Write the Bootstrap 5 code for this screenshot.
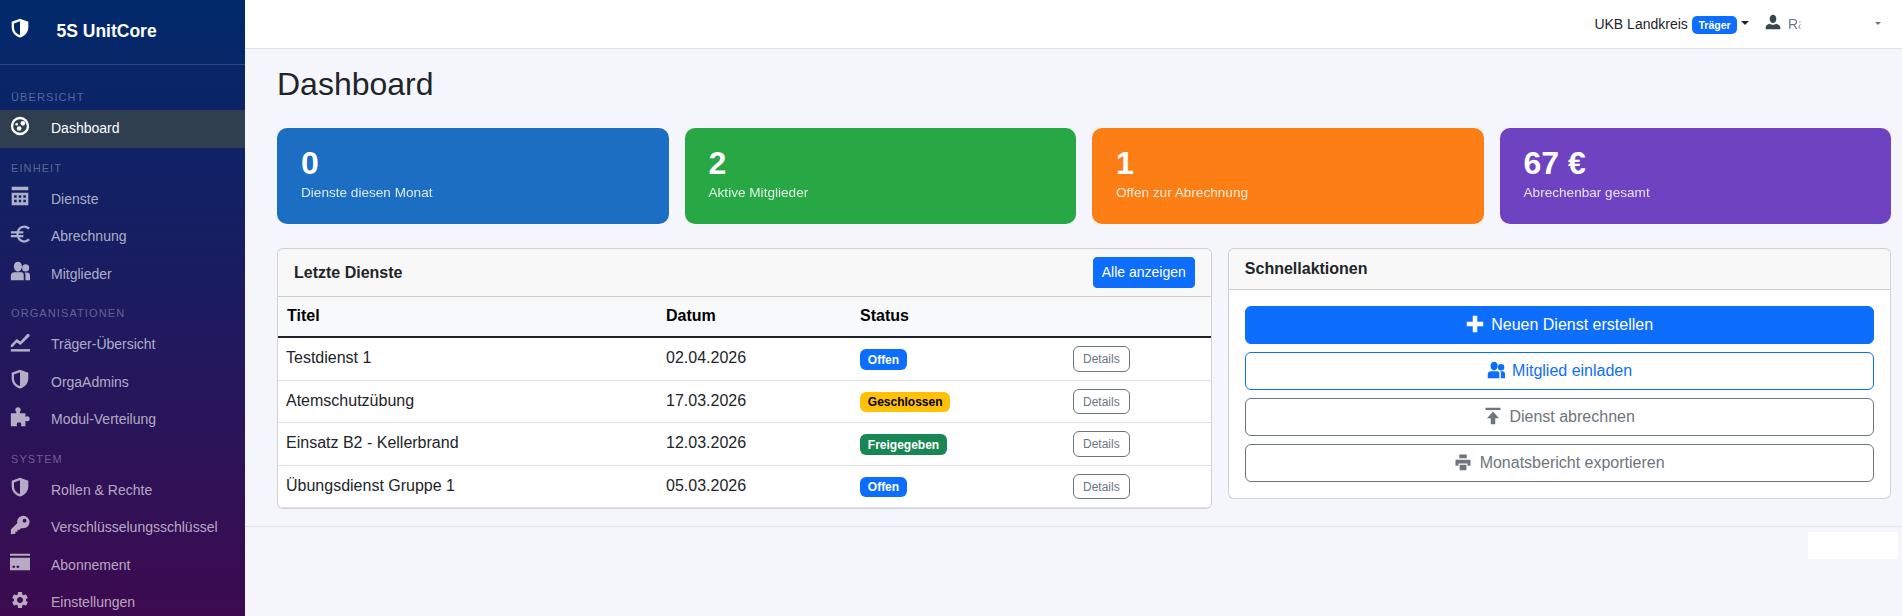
<!DOCTYPE html>
<html lang="de">
<head>
<meta charset="utf-8">
<title>Dashboard</title>
<link href="https://cdn.jsdelivr.net/npm/bootstrap@5.3.0/dist/css/bootstrap.min.css" rel="stylesheet">
<style>
html,body{height:100%;overflow:hidden}
body{font-family:"Liberation Sans",Arial,sans-serif;background:#f4f6fb;color:#212529}
.ico{display:inline-block;fill:currentColor;flex:none}
.app-shell{height:616px}
.side-rail{width:245px;flex:none;height:616px;overflow:hidden;background:linear-gradient(180deg,#012a6b 0%,#1c1b60 48%,#3d0a50 100%)}
.side-rail>*{flex:none}
.side-brand{height:65px;border-bottom:1px solid rgba(255,255,255,.16);padding:0 10px;color:#fff}
.side-brand .ico{width:20px;height:20px;margin-top:-8px}
.side-brand b{font-size:17.5px;margin-left:26.5px;margin-top:-2px}
.rail-label{font-size:11px;line-height:16px;letter-spacing:1.1px;text-transform:uppercase;color:rgba(255,255,255,.33);padding:12.2px 11px 4.5px}
.rail-label.first{padding-top:24px;padding-bottom:5px}
.rail-link{height:37.6px;padding:0 10px;font-size:14px;color:rgba(255,255,255,.65);text-decoration:none}
.rail-link:hover{color:#fff}
.rail-link.on{background:#2f3f4f;color:#fff}
.rail-link .ico{width:20px;height:20px;margin-right:21px;margin-top:-6px}
.top-strip{height:49px;background:#fff;border-bottom:1px solid #dee2e6;padding-right:21px;font-size:14px}
.top-strip a{text-decoration:none;color:#212529}
.top-strip .badge{font-size:10.5px;--bs-badge-border-radius:5px}
.user-menu{margin-left:16px}
.top-strip a.user-menu{color:#6c757d}
.user-menu .ico{width:16px;height:16px;color:#37474f;margin-right:7px;margin-top:-5px;vertical-align:middle}
.user-menu::after{border-top-width:.22em;border-left-width:.22em;border-right-width:.22em;margin-left:3px}
.name-box{display:inline-block;width:84px;background:linear-gradient(90deg,#6c757d 0,#6c757d 10px,transparent 14px);-webkit-background-clip:text;background-clip:text;color:transparent}
.page-body{padding:16px 11px 0 32px}
.page-title{font-size:32px;font-weight:400;line-height:1.2;margin:0 0 25px}
.stat-tile{height:96px;border-radius:10px;padding:16px 24px;color:#fff}
.stat-num{font-size:32px;font-weight:700;line-height:1.2}
.stat-cap{font-size:13.6px;line-height:19.5px;opacity:.85}
.tile-blue{background:#1c6ec2}
.tile-green{background:#28a745}
.tile-orange{background:#fd7e14}
.tile-purple{background:#6f42c1}
.panel-title{font-size:16px}
.card-header{font-weight:700}
.run-table{table-layout:fixed}
.run-table th{color:#000;padding-top:7px;padding-bottom:8px}
.run-table .c1{width:380px;padding-left:9px}
.run-table .c2{width:194px}
.run-table .c3{width:213px}
.btn-mini{--bs-btn-padding-y:2.75px;--bs-btn-padding-x:9px;--bs-btn-font-size:12px;vertical-align:top}
.run-table td .badge{vertical-align:top;margin-top:3px}
.btn .ico{width:18px;height:18px;margin-right:3px;vertical-align:-3px}
.foot-line{margin-top:17px;border-top:1px solid #dee2e6;padding:5px 4px 0 0}
.foot-box{width:90px;height:27px;background:#fff}
</style>
</head>
<body>
<svg width="0" height="0" class="position-absolute">
<defs>
<symbol id="i-shield" viewBox="0 0 24 24"><path fill-rule="evenodd" d="M12 1 22 4.600V11c0 6-4 10.400-10 12.500C6 21.400 2 17 2 11V4.600ZM12 4 4.800 6.500V11c0 4.500 2.900 8 7.200 9.500Z"/></symbol>
<symbol id="i-gauge" viewBox="0 0 24 24"><path fill-rule="evenodd" d="M12 1a11 11 0 1 0 0 22 11 11 0 0 0 0-22Zm0 2.800a8.200 8.200 0 1 1 0 16.400 8.200 8.200 0 0 1 0-16.400Z"/><circle cx="8" cy="10" r="1.600"/><circle cx="15.500" cy="8.800" r="2.800"/><circle cx="11" cy="15" r="2.800"/></symbol>
<symbol id="i-cal" viewBox="0 0 24 24"><path fill-rule="evenodd" d="M2 1h20v4H2ZM2 8h20v15H2ZM5 11v3h3v-3Zm5.500 0v3h3v-3Zm5.500 0v3h3v-3ZM5 16.500v3h3v-3Zm5.500 0v3h3v-3Zm5.500 0v3h3v-3Z"/></symbol>
<symbol id="i-euro" viewBox="0 0 24 24"><path fill="none" stroke="currentColor" stroke-width="2.700" d="M23 5.500C21 3.800 19.200 3 17 3c-4.800 0-8 4-8 9s3.200 9 8 9c2.200 0 4-.8 6-2.500M1 10h15M1 14.500h15"/></symbol>
<symbol id="i-people" viewBox="0 0 24 24"><path d="M9.500 1c2.900 0 4.800 2.500 4.800 5.500s-1.900 6-4.800 6-4.800-3-4.800-6S6.600 1 9.500 1ZM1 23v-5.500c0-2.500 2-4 4-4h9c2 0 2.500 1.500 2.500 4V23Z"/><path d="M18.800 4a3.500 3.500 0 1 1 0 8.500 3.500 3.500 0 0 1 0-8.500ZM18.500 23v-6.500c0-1.300-.4-2-1-2.800h3c2 0 3.500 1.300 3.500 3.300v6Z"/></symbol>
<symbol id="i-chart" viewBox="0 0 24 24"><path d="M1 20.500h23v3H1Z"/><path d="m1 15.500 7-7 4.500 3L21 2l2.500 1v2l-11 10.500L8 12.500l-5 5.500H1Z"/></symbol>
<symbol id="i-puzzle" viewBox="0 0 24 24"><path d="M1 7.500h6.500V5.600C6.500 4.800 6.400 4 6.400 3.500a3.200 3.200 0 0 1 6.400 0c0 .5-.2 1.300-.8 2.100v1.900h6.500V12c.8-.6 1.500-.8 2.100-.8a3 3 0 0 1 0 6c-.6 0-1.300-.2-2.100-.8V23h-5.500c.5-.8.600-1.500.6-2a2.800 2.800 0 0 0-5.600 0c0 .5.100 1.200.6 2H1Z"/></symbol>
<symbol id="i-key" viewBox="0 0 24 24"><path fill-rule="evenodd" d="M16 1a7.500 7.500 0 0 1 0 15c-.9 0-1.700-.2-2.500-.4l-2 2H9v2.400H6.500v2.500L1 23v-5.500l7.900-7.900c-.3-.8-.4-1.600-.4-2.100A7.500 7.500 0 0 1 16 1Zm1.500 3.500a2.300 2.300 0 1 0 0 4.600 2.300 2.300 0 0 0 0-4.600Z"/></symbol>
<symbol id="i-cardico" viewBox="0 0 24 24"><path fill-rule="evenodd" d="M0 2h24v2.500H0ZM0 7h24v15H0Zm3 9.500v2.500h3v-2.500Zm5 0v2.500h3v-2.500Z"/></symbol>
<symbol id="i-gear" viewBox="0 0 24 24"><path d="M19.140 12.940c.04-.3.06-.61.06-.94 0-.32-.02-.64-.07-.94l2.030-1.580a.49.49 0 0 0 .12-.61l-1.920-3.320a.488.488 0 0 0-.59-.22l-2.390.96c-.5-.38-1.030-.7-1.620-.94l-.36-2.540a.484.484 0 0 0-.48-.41h-3.840c-.24 0-.43.17-.47.41l-.36 2.540c-.59.24-1.130.57-1.620.94l-2.390-.96c-.22-.08-.47 0-.59.22L2.740 8.870c-.12.21-.08.47.12.61l2.030 1.580c-.05.3-.09.63-.09.94s.02.64.07.94l-2.030 1.580a.49.49 0 0 0-.12.61l1.920 3.320c.12.22.37.29.59.22l2.390-.96c.5.38 1.030.7 1.620.94l.36 2.54c.05.24.24.41.48.41h3.840c.24 0 .44-.17.47-.41l.36-2.540c.59-.24 1.130-.56 1.620-.94l2.390.96c.22.08.47 0 .59-.22l1.920-3.320c.12-.22.07-.47-.12-.61l-2.010-1.580zM12 15.600c-1.980 0-3.600-1.620-3.600-3.600s1.620-3.600 3.600-3.600 3.600 1.620 3.600 3.600-1.620 3.600-3.600 3.600z"/></symbol>
<symbol id="i-user" viewBox="0 0 24 24"><path d="M12 1c3 0 5 2.500 5 6s-2 6.500-5 6.500S7 10.500 7 7s2-6 5-6ZM1 23v-3c0-3 3-4.500 6.500-5.500 1 1 2.800 1.500 4.500 1.500s3.500-.5 4.500-1.500C20 15.500 23 17 23 20v3Z"/></symbol>
<symbol id="i-plus" viewBox="0 0 24 24"><path d="M9 1h6v8h8v6h-8v8H9v-8H1V9h8Z"/></symbol>
<symbol id="i-up" viewBox="0 0 24 24"><path d="M2 1h20v3H2ZM12 6l8 9h-5v8H9v-8H4Z"/></symbol>
<symbol id="i-print" viewBox="0 0 24 24"><path fill-rule="evenodd" d="M7 2h10v5H7ZM2 9h20v8h-4v-3H6v3H2ZM7.500 15.500h9V23h-9Z"/></symbol>
</defs>
</svg>

<div class="app-shell d-flex">
  <aside class="side-rail d-flex flex-column">
    <div class="side-brand d-flex align-items-center">
      <svg class="ico"><use href="#i-shield"/></svg><b>5S UnitCore</b>
    </div>
    <div class="rail-label first">Übersicht</div>
    <a class="rail-link on d-flex align-items-center" href="#"><svg class="ico"><use href="#i-gauge"/></svg>Dashboard</a>
    <div class="rail-label">Einheit</div>
    <a class="rail-link d-flex align-items-center" href="#"><svg class="ico"><use href="#i-cal"/></svg>Dienste</a>
    <a class="rail-link d-flex align-items-center" href="#"><svg class="ico"><use href="#i-euro"/></svg>Abrechnung</a>
    <a class="rail-link d-flex align-items-center" href="#"><svg class="ico"><use href="#i-people"/></svg>Mitglieder</a>
    <div class="rail-label">Organisationen</div>
    <a class="rail-link d-flex align-items-center" href="#"><svg class="ico"><use href="#i-chart"/></svg>Träger-Übersicht</a>
    <a class="rail-link d-flex align-items-center" href="#"><svg class="ico"><use href="#i-shield"/></svg>OrgaAdmins</a>
    <a class="rail-link d-flex align-items-center" href="#"><svg class="ico"><use href="#i-puzzle"/></svg>Modul-Verteilung</a>
    <div class="rail-label">System</div>
    <a class="rail-link d-flex align-items-center" href="#"><svg class="ico"><use href="#i-shield"/></svg>Rollen &amp; Rechte</a>
    <a class="rail-link d-flex align-items-center" href="#"><svg class="ico"><use href="#i-key"/></svg>Verschlüsselungsschlüssel</a>
    <a class="rail-link d-flex align-items-center" href="#"><svg class="ico"><use href="#i-cardico"/></svg>Abonnement</a>
    <a class="rail-link d-flex align-items-center" href="#"><svg class="ico"><use href="#i-gear"/></svg>Einstellungen</a>
  </aside>

  <div class="flex-grow-1 d-flex flex-column">
    <header class="top-strip d-flex align-items-center justify-content-end">
      <a class="dropdown-toggle" href="#">UKB Landkreis <span class="badge text-bg-primary">Träger</span></a>
      <a class="dropdown-toggle user-menu" href="#"><svg class="ico"><use href="#i-user"/></svg><span class="name-box">Ra</span></a>
    </header>

    <main class="page-body">
      <h1 class="page-title">Dashboard</h1>
      <div class="row g-3 mb-4">
        <div class="col-3"><div class="stat-tile tile-blue"><div class="stat-num">0</div><div class="stat-cap">Dienste diesen Monat</div></div></div>
        <div class="col-3"><div class="stat-tile tile-green"><div class="stat-num">2</div><div class="stat-cap">Aktive Mitglieder</div></div></div>
        <div class="col-3"><div class="stat-tile tile-orange"><div class="stat-num">1</div><div class="stat-cap">Offen zur Abrechnung</div></div></div>
        <div class="col-3"><div class="stat-tile tile-purple"><div class="stat-num">67 €</div><div class="stat-cap">Abrechenbar gesamt</div></div></div>
      </div>
      <div class="row g-3">
        <div class="col-7">
          <div class="card overflow-hidden">
            <div class="card-header d-flex align-items-center justify-content-between">
              <span class="panel-title">Letzte Dienste</span>
              <a class="btn btn-sm btn-primary" href="#">Alle anzeigen</a>
            </div>
            <table class="table run-table mb-0">
              <thead class="table-light">
                <tr><th class="c1">Titel</th><th class="c2">Datum</th><th class="c3">Status</th><th></th></tr>
              </thead>
              <tbody class="table-group-divider">
                <tr><td>Testdienst 1</td><td>02.04.2026</td><td><span class="badge text-bg-primary">Offen</span></td><td><a class="btn btn-mini btn-outline-secondary" href="#">Details</a></td></tr>
                <tr><td>Atemschutzübung</td><td>17.03.2026</td><td><span class="badge text-bg-warning">Geschlossen</span></td><td><a class="btn btn-mini btn-outline-secondary" href="#">Details</a></td></tr>
                <tr><td>Einsatz B2 - Kellerbrand</td><td>12.03.2026</td><td><span class="badge text-bg-success">Freigegeben</span></td><td><a class="btn btn-mini btn-outline-secondary" href="#">Details</a></td></tr>
                <tr><td>Übungsdienst Gruppe 1</td><td>05.03.2026</td><td><span class="badge text-bg-primary">Offen</span></td><td><a class="btn btn-mini btn-outline-secondary" href="#">Details</a></td></tr>
              </tbody>
            </table>
          </div>
        </div>
        <div class="col-5">
          <div class="card">
            <div class="card-header"><span class="panel-title">Schnellaktionen</span></div>
            <div class="card-body d-grid gap-2">
              <a class="btn btn-primary" href="#"><svg class="ico"><use href="#i-plus"/></svg> Neuen Dienst erstellen</a>
              <a class="btn btn-outline-primary" href="#"><svg class="ico"><use href="#i-people"/></svg> Mitglied einladen</a>
              <a class="btn btn-outline-secondary" href="#"><svg class="ico"><use href="#i-up"/></svg> Dienst abrechnen</a>
              <a class="btn btn-outline-secondary" href="#"><svg class="ico"><use href="#i-print"/></svg> Monatsbericht exportieren</a>
            </div>
          </div>
        </div>
      </div>
    </main>
    <footer class="foot-line d-flex justify-content-end"><div class="foot-box"></div></footer>
  </div>
</div>
<script src="https://cdn.jsdelivr.net/npm/bootstrap@5.3.0/dist/js/bootstrap.bundle.min.js"></script>
</body>
</html>
